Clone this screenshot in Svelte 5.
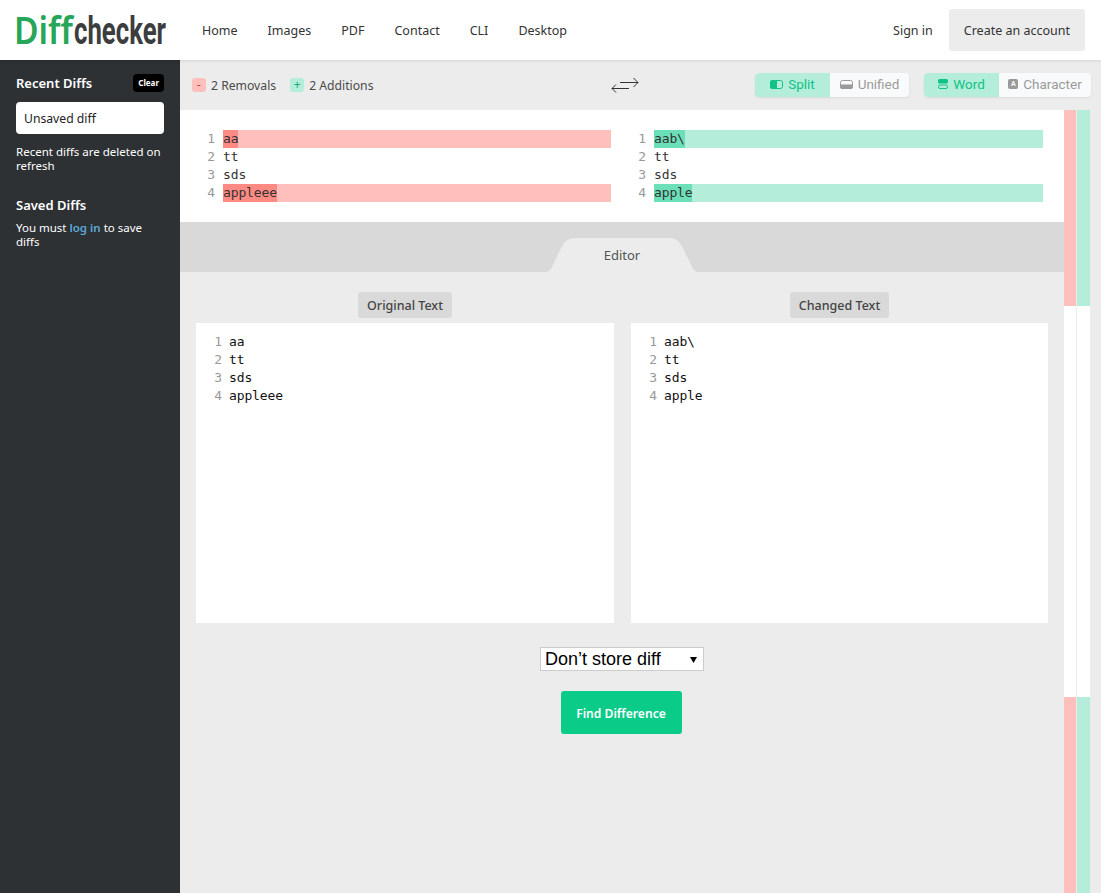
<script>
    // Content of the two sides of the diff.
    const original = [
        { text: 'aa', changed: true },
        { text: 'tt' },
        { text: 'sds' },
        { text: 'appleee', changed: true }
    ];
    const modified = [
        { text: 'aab\\', changed: true },
        { text: 'tt' },
        { text: 'sds' },
        { text: 'apple', changed: true }
    ];
    const navLinks = ['Home', 'Images', 'PDF', 'Contact', 'CLI', 'Desktop'];
    const editors = [
        { title: 'Original Text', lines: original },
        { title: 'Changed Text', lines: modified }
    ];
</script>

<header class="topbar">
    <svg class="logo" width="152" height="40" viewBox="0 0 152 40" role="img" aria-label="Diffchecker">
        <text x="-2" y="34" class="logo-diff" textLength="59" lengthAdjust="spacingAndGlyphs">Diff</text>
        <text x="58" y="34" class="logo-checker" textLength="92" lengthAdjust="spacingAndGlyphs">checker</text>
    </svg>
    <nav class="nav">
        {#each navLinks as link}
            <span>{link}</span>
        {/each}
    </nav>
    <div class="account">
        <span>Sign in</span>
        <span class="create">Create an account</span>
    </div>
</header>

<div class="page">
    <aside class="sidebar">
        <div class="side-head">
            <h3>Recent Diffs</h3>
            <span class="clear">Clear</span>
        </div>
        <div class="unsaved">Unsaved diff</div>
        <p>Recent diffs are deleted on refresh</p>
        <h3 class="saved">Saved Diffs</h3>
        <p class="must">You must <span class="login">log in</span> to save diffs</p>
    </aside>

    <main class="main">
        <div class="toolbar">
            <div class="stats">
                <span class="chip red">-</span><span class="stat">2 Removals</span>
                <span class="chip green">+</span><span class="stat">2 Additions</span>
            </div>
            <svg class="swap" width="28" height="16" viewBox="0 0 28 16" fill="none" stroke="#333" stroke-width="1">
                <path d="M9 4.500H27M22.500 0L27 4.500L22.500 9" />
                <path d="M18 10.500H1M5 6.500L1 10.500L5 14.500" />
            </svg>
            <div class="toggles">
                <div class="toggle">
                    <span class="opt on opt-split">
                        <svg width="13" height="9" viewBox="0 0 13 9"><rect x=".5" y=".5" width="12" height="8" rx="2" fill="none" stroke="currentColor" /><path d="M2.500 0H7V9H2.500A2.500 2.500 0 0 1 0 6.500V2.500A2.500 2.500 0 0 1 2.500 0Z" fill="currentColor" /></svg>
                        Split
                    </span>
                    <span class="opt opt-unified">
                        <svg width="13" height="9" viewBox="0 0 13 9"><rect x=".5" y=".5" width="12" height="8" rx="2" fill="none" stroke="currentColor" /><path d="M0 4.500H13V6.500A2.500 2.500 0 0 1 10.500 9H2.500A2.500 2.500 0 0 1 0 6.500Z" fill="currentColor" /></svg>
                        Unified
                    </span>
                </div>
                <div class="toggle">
                    <span class="opt on opt-word">
                        <svg width="10" height="10" viewBox="0 0 10 10"><rect width="10" height="4.500" rx="1.500" fill="currentColor" /><rect x=".5" y="6" width="9" height="3.500" rx="1.500" fill="none" stroke="currentColor" /></svg>
                        Word
                    </span>
                    <span class="opt opt-char">
                        <span class="char-icon">A</span>
                        Character
                    </span>
                </div>
            </div>
        </div>

        <div class="result-row">
            <div class="content">
                <section class="diff">
                    <div class="diff-side">
                        {#each original as line, i}
                            <div class="diff-line">
                                <span class="num">{i + 1}</span>
                                <span class="code" class:del={line.changed}><span class:del-word={line.changed}>{line.text}</span></span>
                            </div>
                        {/each}
                    </div>
                    <div class="diff-side">
                        {#each modified as line, i}
                            <div class="diff-line">
                                <span class="num">{i + 1}</span>
                                <span class="code" class:add={line.changed}><span class:add-word={line.changed}>{line.text}</span></span>
                            </div>
                        {/each}
                    </div>
                </section>

                <div class="tabbar">
                    <svg class="tab" width="152" height="34" viewBox="0 0 152 34">
                        <path d="M0 34C3 34 5 31 6 29L14 12C18 4 21 0 30 0H122C131 0 134 4 138 12L146 29C147 31 149 34 152 34Z" fill="#ececec" />
                        <text x="76" y="22" text-anchor="middle">Editor</text>
                    </svg>
                </div>

                <section class="editors">
                    {#each editors as editor}
                        <div class="editor">
                            <span class="editor-title">{editor.title}</span>
                            <div class="editor-box">
                                {#each editor.lines as line, i}
                                    <div class="editor-line">
                                        <span class="num">{i + 1}</span>
                                        <span>{line.text}</span>
                                    </div>
                                {/each}
                            </div>
                        </div>
                    {/each}
                </section>

                <div class="actions">
                    <div class="fake-select">
                        <span>Don’t store diff</span>
                        <svg width="7" height="7" viewBox="0 0 7 7"><path d="M0 1H7L3.500 7Z" fill="#000" /></svg>
                    </div>
                    <button class="find">Find Difference</button>
                </div>
            </div>

            <div class="minimap">
                <div class="map-col map-left">
                    <div class="map-red"></div>
                    <div class="map-gap"></div>
                    <div class="map-red"></div>
                </div>
                <div class="map-col map-right">
                    <div class="map-green"></div>
                    <div class="map-gap"></div>
                    <div class="map-green"></div>
                </div>
            </div>
        </div>
    </main>
</div>

<style>
    :global(body) {
        font-family: "Noto Sans", "Open Sans", sans-serif;
        background-color: #ececec;
        color: #333;
        overflow: hidden;
    }

    .topbar {
        position: relative;
        z-index: 2;
        height: 60px;
        background-color: white;
        box-shadow: 0 1px 3px rgba(0, 0, 0, 0.1);
        display: flex;
        align-items: center;
        padding: 0 16px;
        box-sizing: border-box;
        font-size: 12.5px;
    }

    .logo {
        flex: none;
        overflow: visible;
    }

    .logo text {
        font-size: 38px;
    }

    .logo-diff {
        font-family: "Noto Sans", sans-serif;
        font-weight: 600;
        fill: #27a659;
    }

    .logo-checker {
        font-family: "Roboto", sans-serif;
        font-weight: 700;
        fill: #3b3d3f;
    }

    .nav {
        display: flex;
        gap: 30px;
        margin-left: 34px;
        flex: 1;
    }

    .account {
        display: flex;
        align-items: center;
        gap: 16px;
    }

    .create {
        background-color: #ececec;
        border-radius: 3px;
        padding: 0 15px;
        height: 42px;
        line-height: 43px;
    }

    .page {
        display: flex;
        height: 833px;
    }

    .sidebar {
        width: 180px;
        flex: none;
        background-color: #2d3134;
        color: white;
        padding: 14px 16px;
        box-sizing: border-box;
        font-size: 11.5px;
        line-height: 14px;
    }

    .side-head {
        display: flex;
        justify-content: space-between;
        align-items: center;
        height: 18px;
    }

    h3 {
        margin: 0;
        font-size: 13px;
        font-weight: 600;
    }

    .clear {
        background-color: black;
        border-radius: 4px;
        font-size: 8px;
        font-weight: 700;
        padding: 3px 5px;
        line-height: 12px;
    }

    .unsaved {
        background-color: white;
        color: #222;
        border-radius: 4px;
        height: 32px;
        line-height: 33px;
        padding-left: 8px;
        margin-top: 10px;
        font-size: 12.2px;
    }

    .sidebar p {
        margin: 11px 0 0;
    }

    .saved {
        margin-top: 23px;
        line-height: 18px;
    }

    .sidebar .must {
        margin-top: 7px;
    }

    .login {
        color: #5ba9d6;
        font-weight: 600;
    }

    .main {
        flex: 1;
        min-width: 0;
    }

    .toolbar {
        height: 50px;
        display: flex;
        align-items: center;
        position: relative;
        padding: 0 10px 0 12px;
        font-size: 12.2px;
    }

    .stats {
        display: flex;
        align-items: center;
        color: #4a4a4a;
    }

    .chip {
        width: 14px;
        height: 14px;
        border-radius: 3px;
        line-height: 14px;
        text-align: center;
        font-size: 12px;
    }

    .chip.red {
        background-color: #ffc0bd;
        color: #d23c3c;
    }

    .chip.green {
        background-color: #b4eedb;
        color: #1faa78;
    }

    .stat {
        margin: 0 14px 0 5px;
    }

    .swap {
        position: absolute;
        left: 431px;
        top: 18px;
    }

    .toggles {
        margin-left: auto;
        display: flex;
        gap: 15px;
    }

    .toggle {
        display: flex;
        height: 24px;
        border-radius: 4px;
        overflow: hidden;
        box-shadow: 0 1px 2px rgba(0, 0, 0, 0.08);
        background-color: #f9fafb;
    }

    .opt {
        display: flex;
        align-items: center;
        justify-content: center;
        gap: 5px;
        color: #9a9a9a;
        font-family: "Roboto", sans-serif;
        font-size: 13.5px;
        padding-bottom: 2px;
        box-sizing: border-box;
    }

    .opt.on {
        background-color: #b4eedb;
        color: #10c285;
    }

    .opt-split {
        width: 75px;
    }

    .opt-unified {
        width: 79px;
    }

    .opt-word {
        width: 75px;
    }

    .opt-char {
        width: 92px;
    }

    .char-icon {
        width: 10px;
        height: 10px;
        background-color: #999;
        color: white;
        border-radius: 2px;
        font-size: 7px;
        line-height: 10px;
        text-align: center;
        font-weight: 700;
    }

    .result-row {
        display: flex;
        height: 783px;
    }

    .content {
        width: 884px;
        flex: none;
    }

    .diff {
        background-color: white;
        height: 112px;
        box-sizing: border-box;
        padding-top: 20px;
        display: flex;
    }

    .diff-side {
        width: 431px;
    }

    .diff-line {
        display: flex;
        height: 18px;
        line-height: 18px;
        font-family: "DejaVu Sans Mono", "Liberation Mono", monospace;
        font-size: 13px;
        letter-spacing: -0.13px;
    }

    .num {
        width: 35px;
        margin-right: 8px;
        text-align: right;
        color: #999;
        flex: none;
    }

    .code {
        width: 388px;
        color: #333;
    }

    .diff-side:last-child .code {
        width: 389px;
        flex: none;
    }

    .del {
        background-color: #ffc0bd;
    }

    .del-word {
        background-color: #ff8983;
        display: inline-block;
    }

    .add {
        background-color: #b4eedb;
    }

    .add-word {
        background-color: #6be0b8;
        display: inline-block;
    }

    .tabbar {
        height: 50px;
        background-color: #d9d9d9;
        display: flex;
        justify-content: center;
        align-items: flex-end;
    }

    .tab text {
        font-family: "Noto Sans", sans-serif;
        font-size: 13px;
        fill: #555;
    }

    .editors {
        display: grid;
        grid-template-columns: 418px 417px;
        gap: 17px;
        padding: 20px 16px 0 16px;
    }

    .editor {
        display: flex;
        flex-direction: column;
        align-items: center;
    }

    .editor-title {
        background-color: #d9d9d9;
        border-radius: 3px;
        height: 26px;
        line-height: 27px;
        padding: 0 9px;
        font-size: 12.5px;
        font-weight: 500;
        color: #444;
    }

    .editor-box {
        margin-top: 5px;
        align-self: stretch;
        background-color: white;
        height: 300px;
        box-sizing: border-box;
        padding-top: 10px;
    }

    .editor-line {
        display: flex;
        height: 18px;
        line-height: 18px;
        font-family: "DejaVu Sans Mono", "Liberation Mono", monospace;
        font-size: 13px;
        letter-spacing: -0.13px;
        color: #111;
    }

    .editor-line .num {
        width: 26px;
        margin-right: 7px;
    }

    .actions {
        display: flex;
        flex-direction: column;
        align-items: center;
        margin-top: 24px;
    }

    .fake-select {
        width: 164px;
        height: 24px;
        box-sizing: border-box;
        border: 1px solid #ccc;
        background-color: white;
        display: flex;
        align-items: center;
        justify-content: space-between;
        padding: 0 6px 0 4px;
        font-family: "Liberation Sans", Arial, sans-serif;
        font-size: 18px;
        color: #000;
    }

    .find {
        margin: 20px 2px 0 0;
        width: 121px;
        height: 43px;
        border: none;
        border-radius: 3px;
        background-color: #0acb88;
        color: white;
        font-family: "Noto Sans", sans-serif;
        font-size: 12.1px;
        font-weight: 600;
        padding: 2px 0 0;
    }

    .minimap {
        display: flex;
        gap: 1px;
    }

    .map-col {
        display: flex;
        flex-direction: column;
    }

    .map-left {
        width: 12px;
    }

    .map-right {
        width: 13px;
    }

    .map-red {
        height: 196px;
        background-color: #ffc0bd;
    }

    .map-green {
        height: 196px;
        background-color: #b4eedb;
    }

    .map-gap {
        height: 391px;
        background-color: white;
    }
</style>
